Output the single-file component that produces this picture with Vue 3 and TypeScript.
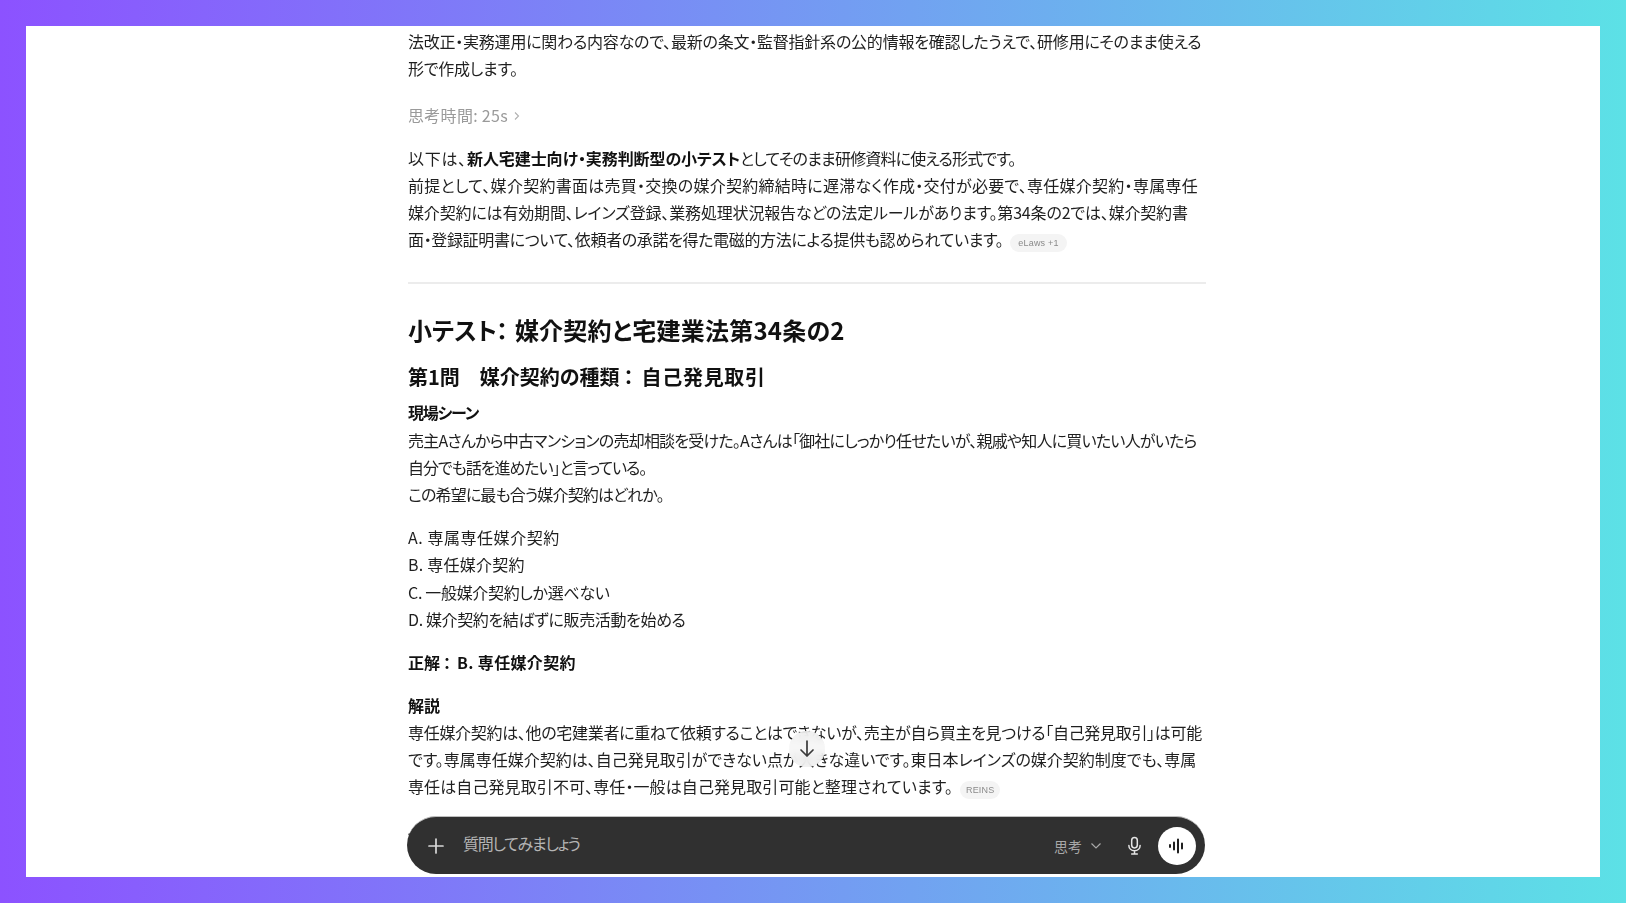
<script setup lang="ts">
interface Line {
  text: string
  tight: number
}

const scene: Line[] = [
  { text: '売主Aさんから中古マンションの売却相談を受けた。Aさんは「御社にしっかり任せたいが、親戚や知人に買いたい人がいたら', tight: -0.78 },
  { text: '自分でも話を進めたい」と言っている。', tight: -1.05 },
  { text: 'この希望に最も合う媒介契約はどれか。', tight: -0.86 },
]

const options: Line[] = [
  { text: 'A. 専属専任媒介契約', tight: 0.55 },
  { text: 'B. 専任媒介契約', tight: 0.25 },
  { text: 'C. 一般媒介契約しか選べない', tight: -0.32 },
  { text: 'D. 媒介契約を結ばずに販売活動を始める', tight: -0.38 },
]

const spacing = (value: number) => ({ letterSpacing: `${value}px` })
</script>

<template>
  <div class="frame">
    <main class="panel">
      <article class="column">
        <p class="intro">
          <span class="line" :style="spacing(-0.23)">法改正・実務運用に関わる内容なので、最新の条文・監督指針系の公的情報を確認したうえで、研修用にそのまま使える</span>
          <span class="line" :style="spacing(-0.26)">形で作成します。</span>
        </p>
        <div class="thinking">
          <span :style="spacing(0.3)">思考時間: 25s</span>
          <svg width="8" height="10" viewBox="0 0 8 10" fill="none" stroke="#b0b0b0" stroke-width="1.1"><path d="M2 1.5 5.5 5 2 8.5" /></svg>
        </div>
        <p class="lead">
          <span class="line"><span :style="spacing(0.75)">以下は、</span><strong class="lead-strong">新人宅建士向け・実務判断型の小テスト</strong><span :style="spacing(-0.83)">としてそのまま研修資料に使える形式です。</span></span>
          <span class="line" :style="spacing(0.26)">前提として、媒介契約書面は売買・交換の媒介契約締結時に遅滞なく作成・交付が必要で、専任媒介契約・専属専任</span>
          <span class="line" :style="spacing(-0.17)">媒介契約には有効期間、レインズ登録、業務処理状況報告などの法定ルールがあります。第34条の2では、媒介契約書</span>
          <span class="line"><span :style="spacing(-0.35)">面・登録証明書について、依頼者の承諾を得た電磁的方法による提供も認められています。</span><span class="pill">eLaws +1</span></span>
        </p>
        <hr class="rule" />
        <h2>小テスト<span class="colon-h2">：</span><span class="h2-tail">媒介契約と宅建業法第34条の2</span></h2>
        <h3>第1問　媒介契約の種類<span class="colon-h3">：</span><span class="h3-tail">自己発見取引</span></h3>
        <p class="scene">
          <strong class="line label">現場シーン</strong>
          <span v-for="line in scene" :key="line.text" class="line" :style="spacing(line.tight)">{{ line.text }}</span>
        </p>
        <ul class="options">
          <li v-for="option in options" :key="option.text" :style="spacing(option.tight)">{{ option.text }}</li>
        </ul>
        <p class="answer"><strong>正解<span class="colon-body">：</span><span class="answer-tail">B. 専任媒介契約</span></strong></p>
        <p class="explain">
          <strong class="line">解説</strong>
          <span class="line" :style="spacing(-0.31)">専任媒介契約は、他の宅建業者に重ねて依頼することはできないが、売主が自ら買主を見つける「自己発見取引」は可能</span>
          <span class="line">です。専属専任媒介契約は、自己発見取引ができない点が大きな違いです。東日本レインズの媒介契約制度でも、専属</span>
          <span class="line"><span :style="spacing(0.1)">専任は自己発見取引不可、専任・一般は自己発見取引可能と整理されています。</span><span class="pill pill-narrow">REINS</span></span>
        </p>
        <p class="next">ノ</p>
      </article>

      <button class="scroll-down" aria-label="下へスクロール">
        <svg width="18" height="20" viewBox="0 0 18 20" fill="none" stroke="#3a3a3a" stroke-width="1.7" stroke-linecap="round" stroke-linejoin="round"><path d="M9 2v15M3 11l6 6 6-6" /></svg>
      </button>

      <div class="composer">
        <svg class="plus" width="18" height="18" viewBox="0 0 18 18" fill="none" stroke="#d8d8d8" stroke-width="1.7" stroke-linecap="round"><path d="M9 2v14M2 9h14" /></svg>
        <span class="placeholder">質問してみましょう</span>
        <span class="mode">思考</span>
        <svg class="chev" width="12" height="8" viewBox="0 0 12 8" fill="none" stroke="#a8a8a8" stroke-width="1.2"><path d="M1.5 1.5 6 6l4.5-4.5" /></svg>
        <svg class="mic" width="15" height="20" viewBox="0 0 16 20" fill="none" stroke="#e4e4e4" stroke-width="1.6" stroke-linecap="round"><rect x="5" y="1" width="6" height="11" rx="3" /><path d="M2 9.5c0 3.4 2.6 5.5 6 5.5s6-2.1 6-5.5M8 15v3.5M5 18.5h6" /></svg>
        <span class="voice">
          <svg width="18" height="16" viewBox="0 0 18 16" fill="none" stroke="#202020" stroke-width="2" stroke-linecap="round"><path d="M2 7v2M6 4.5v7M10 1.5v13M14 5.5v5" /></svg>
        </span>
      </div>
    </main>
  </div>
</template>

<style scoped>
.frame {
  height: 903px;
  box-sizing: border-box;
  padding: 26px;
  background: linear-gradient(90deg, #8c52ff 0%, #5ce1e6 100%);
}

.panel {
  position: relative;
  height: 851px;
  overflow: hidden;
  background: #fff;
}

.column {
  width: 798px;
  margin-left: 382px;
  padding-top: 2px;
  color: #1f1f1f;
  font-family: "Noto Sans CJK JP", "Liberation Sans", sans-serif;
  font-size: 16px;
  line-height: 27px;
  font-feature-settings: "palt" 1;
  white-space: nowrap;
  filter: blur(0.3px);
}

p {
  margin: 0;
}

.line {
  display: block;
}

strong {
  font-weight: 700;
  color: #111;
}

.lead-strong {
  letter-spacing: -0.08px;
}

.label {
  margin-bottom: 1px;
  letter-spacing: -1.2px;
}

.intro {
  margin-bottom: 20px;
}

.thinking {
  display: flex;
  align-items: center;
  gap: 5px;
  margin-bottom: 16px;
  color: #9a9a9a;
}

.pill {
  display: inline-block;
  margin-left: 7px;
  padding: 0 8px;
  height: 18px;
  border-radius: 9px;
  background: #f4f4f4;
  color: #8a8a8a;
  font-family: "Liberation Sans", sans-serif;
  font-size: 9px;
  letter-spacing: 0.2px;
  line-height: 18px;
}

.pill-narrow {
  padding: 0 6px;
}

.rule {
  height: 2px;
  margin: 29px 0 29px;
  border: 0;
  background: #ececec;
}

h2 {
  margin: 0 0 15px;
  font-size: 24px;
  font-weight: 600;
  line-height: 34px;
  color: #111;
}

.colon-h2 {
  margin: 0 7px 0 -1px;
}

.h2-tail {
  letter-spacing: 0.25px;
}

h3 {
  margin: 0 0 7px;
  font-size: 20px;
  font-weight: 600;
  line-height: 30px;
  color: #111;
}

.colon-h3 {
  margin: 0 8px 0 4px;
}

.h3-tail {
  letter-spacing: 0.7px;
}

.colon-body {
  margin: 0 6px 0 3px;
}

.answer-tail {
  letter-spacing: 0.35px;
}

.options {
  margin: 16px 0;
  padding: 0;
  line-height: 27.3px;
  list-style: none;
}

.answer {
  margin-bottom: 16px;
}

.next {
  margin-top: 15px;
  margin-left: -1px;
}

.scroll-down {
  position: absolute;
  left: 763px;
  top: 705px;
  display: flex;
  align-items: center;
  justify-content: center;
  width: 36px;
  height: 36px;
  padding: 0;
  border: 0;
  border-radius: 50%;
  background: rgba(245, 245, 245, 0.82);
  backdrop-filter: blur(4px);
}

.composer {
  position: absolute;
  left: 381px;
  bottom: 3px;
  display: flex;
  align-items: center;
  box-sizing: border-box;
  width: 798px;
  height: 58px;
  padding: 0 9px 0 20px;
  border-radius: 29px;
  border-top: 1px solid #bdbdbd;
  background: #303030;
  font-family: "Noto Sans CJK JP", "Liberation Sans", sans-serif;
  font-feature-settings: "palt" 1;
}

.plus {
  flex: none;
}

.placeholder {
  flex: 1;
  margin: 0 0 6px 18px;
  color: #b4b4b4;
  font-size: 16px;
  letter-spacing: -1.27px;
}

.mode {
  margin-left: 1px;
  color: #a8a8a8;
  font-size: 14px;
}

.chev {
  margin-left: 8px;
}

.mic {
  margin-left: 25px;
}

.voice {
  display: flex;
  align-items: center;
  justify-content: center;
  width: 38px;
  height: 38px;
  margin-left: 16px;
  border-radius: 50%;
  background: #fff;
}
</style>
